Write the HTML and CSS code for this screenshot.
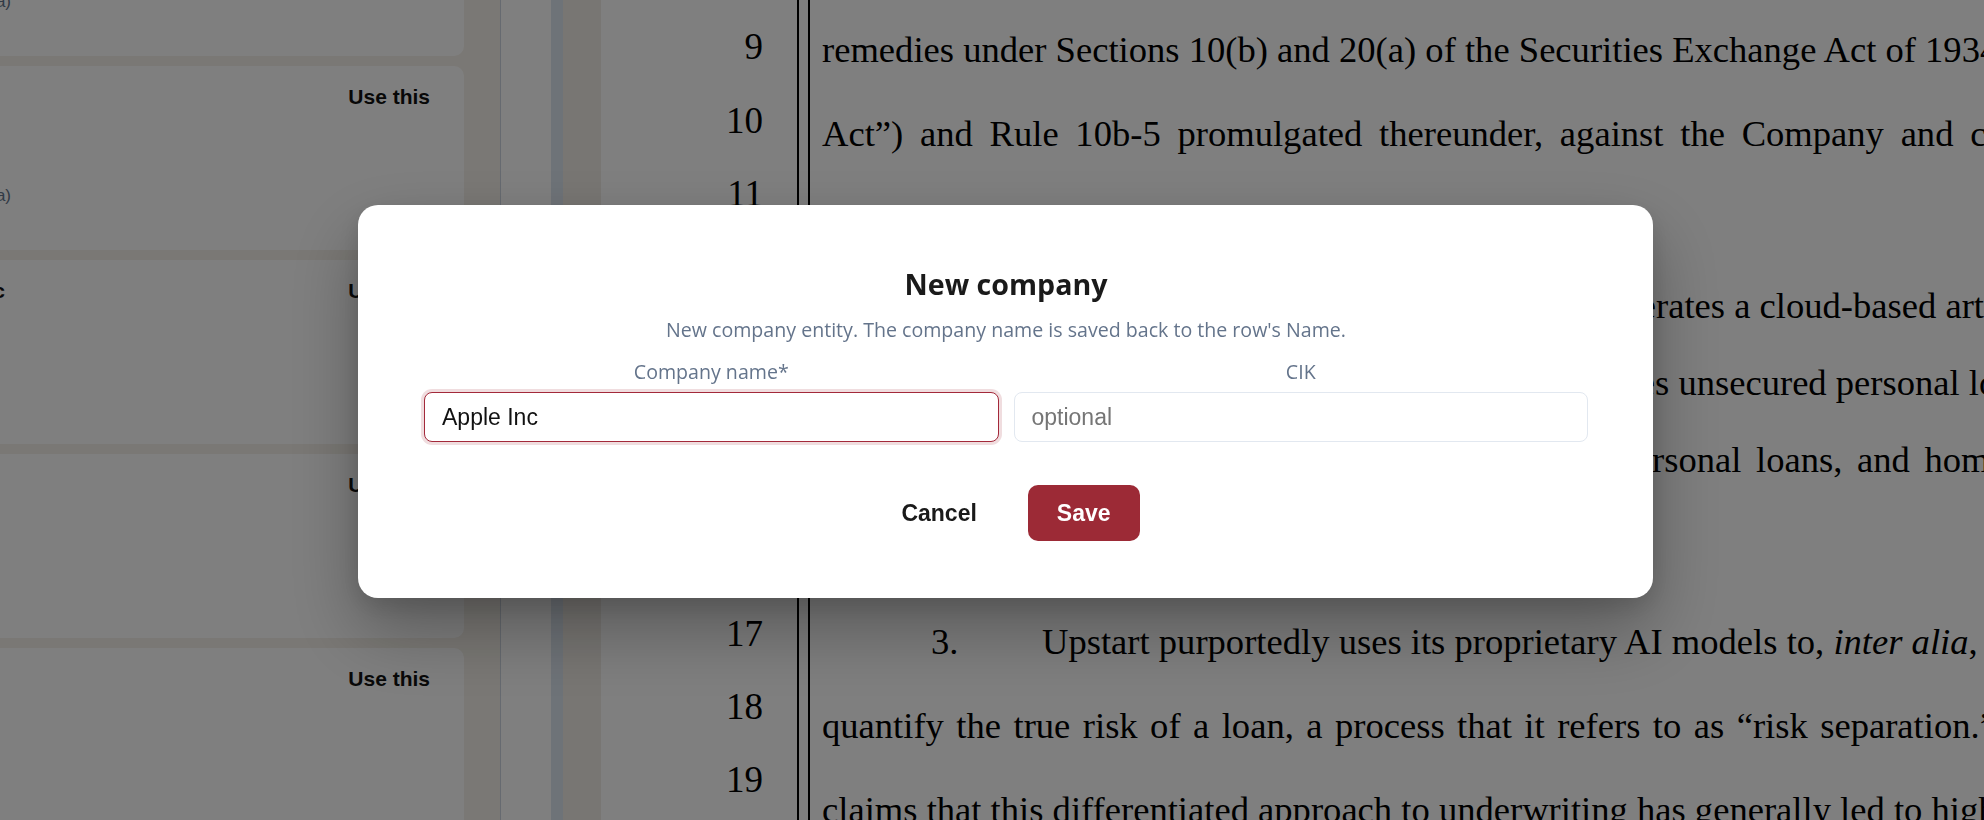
FILE: index.html
```html
<!DOCTYPE html>
<html lang="en">
<head>
<meta charset="UTF-8" />
<meta name="viewport" content="width=device-width, initial-scale=1" />
<title>Complaint review - New company</title>
<link rel="stylesheet" href="styles.css">
</head>
<body>

<div class="app">
  <aside class="side">
    <div class="list">
      <div class="card">
        <div class="card-info">
          <div class="card-title">Apple REIT Ten Inc</div>
          <div class="card-meta">
            <div>CIK 0001498864</div>
            <div>Matched on name</div>
            <div class="tail">Sections 10(b) and 20(a)</div>
          </div>
        </div>
        <span class="use">Use this</span>
      </div>

      <div class="card">
        <div class="card-info">
          <div class="card-title">Apple Hospitality</div>
          <div class="card-meta">
            <div>CIK 0001418121</div>
            <div>Matched on name</div>
            <div class="tail">Sections 10(b) and 20(a)</div>
          </div>
        </div>
        <span class="use">Use this</span>
      </div>

      <div class="card">
        <div class="card-info">
          <div class="card-title tail">Apple Inc</div>
          <div class="card-meta">
            <div>CIK 0000320193</div>
            <div>Exact match</div>
            <div>Rule 10b-5</div>
          </div>
        </div>
        <span class="use">Use this</span>
      </div>

      <div class="card">
        <div class="card-info">
          <div class="card-title">Upstart</div>
          <div class="card-meta">
            <div>CIK 0001647639</div>
            <div>Named defendant</div>
            <div>Rule 10b-5</div>
          </div>
        </div>
        <span class="use">Use this</span>
      </div>

      <div class="card">
        <div class="card-info">
          <div class="card-title">Upstart Network</div>
          <div class="card-meta">
            <div>No CIK</div>
            <div>Subsidiary</div>
            <div>Rule 10b-5</div>
          </div>
        </div>
        <span class="use">Use this</span>
      </div>
    </div>
  </aside>

  <div class="pane"></div>
  <div class="splitter"></div>
  <div class="gutter"></div>

  <main class="doc">
    <div class="numbers">
      <div>8</div>
      <div>9</div>
      <div>10</div>
      <div>11</div>
      <div>12</div>
      <div>13</div>
      <div>14</div>
      <div>15</div>
      <div>16</div>
      <div>17</div>
      <div>18</div>
      <div>19</div>
    </div>
    <div class="rule"></div>
    <div class="text">
      <div class="para p1">
        <div class="ln">remedies under Sections 10(b) and 20(a) of the Securities Exchange Act of 1934 (the &ldquo;Exchange</div>
        <div class="ln ws-wide">Act&rdquo;) and Rule 10b-5 promulgated thereunder, against the Company and certain of its</div>
      </div>
      <div class="para p2">
        <div class="ln"><span class="under">Upstart, through its subsidiaries, ope</span>rates a cloud-based artificial intelligence</div>
        <div class="ln"><span class="under under-d">a lending marketplace that originate</span>s unsecured personal loans, auto</div>
        <div class="ln ws-mid"><span class="under under-e">refinance loans, small-dollar pe</span>rsonal loans, and home equity</div>
        <div class="ln">lines of credit.</div>
      </div>
      <div class="para p3">
        <div class="ln first"><span class="pnum">3.</span>Upstart purportedly uses its proprietary AI models to, <em>inter alia</em>, better</div>
        <div class="ln ws-tight">quantify the true risk of a loan, a process that it refers to as &ldquo;risk separation.&rdquo;</div>
        <div class="ln">claims that this differentiated approach to underwriting has generally led to higher</div>
      </div>
    </div>
  </main>
</div>

<div class="backdrop">
  <div class="modal">
    <h2>New company</h2>
    <p class="sub">New company entity. The company name is saved back to the row's Name.</p>

    <div class="fields">
      <div class="field">
        <label for="companyName">Company name*</label>
        <input id="companyName" type="text" class="is-focused" value="Apple Inc" />
      </div>
      <div class="field">
        <label for="cik">CIK</label>
        <input id="cik" type="text" placeholder="optional" />
      </div>
    </div>

    <div class="actions">
      <button class="btn">Cancel</button>
      <button class="btn btn-primary">Save</button>
    </div>
  </div>
</div>

</body>
</html>
```

FILE: styles.css
```css
html, body {
  margin: 0;
  padding: 0;
}

body {
  width: 1984px;
  height: 820px;
  overflow: hidden;
  font-family: "Liberation Sans", Arial, sans-serif;
  background: #fff;
}

.app {
  display: flex;
  height: 820px;
}

/* left candidate list (scrolled partly out of view) */
.side {
  flex: 0 0 501px;
  box-sizing: border-box;
  padding-right: 36px;
  background: #f5f1ea;
  border-right: 1px solid #cdd5e0;
  overflow: hidden;
}

.list {
  display: flex;
  flex-direction: column;
  gap: 10.5px;
  margin: -128px 0 0 -20px;
}

.card {
  display: flex;
  align-items: flex-start;
  height: 183.5px;
  box-sizing: border-box;
  padding: 18px 34px 0 0;
  background: #fff;
  border-radius: 10px;
}

.card-info {
  width: 300px;
  margin-left: -269px;
  overflow: hidden;
  white-space: nowrap;
}

.card-title {
  font-size: 21px;
  font-weight: bold;
  line-height: 26px;
  color: #111;
}

.card-title.tail {
  padding-right: 6px;
}

.card-meta {
  margin-top: 11px;
  font-size: 17px;
  line-height: 30px;
  color: #64748b;
}

.tail {
  text-align: right;
}

.use {
  margin-left: auto;
  font-size: 21px;
  font-weight: bold;
  line-height: 26px;
  color: #111;
}

.pane {
  flex: 0 0 50px;
  background: #fff;
}

.splitter {
  flex: 0 0 12px;
  background: #dde6f0;
}

.gutter {
  flex: 0 0 38px;
  background: #f0ece6;
}

/* pleading page */
.doc {
  flex: 1;
  min-width: 0;
  display: flex;
  overflow: hidden;
  background: #fff;
  color: #000;
  font-family: "Liberation Serif", "Times New Roman", serif;
}

.numbers {
  flex: 0 0 162px;
  margin-top: -62.9px;
  text-align: right;
  font-size: 37px;
  line-height: 73.3px;
}

.rule {
  flex: 0 0 9px;
  margin-left: 34px;
  border-left: 2px solid #000;
  border-right: 2px solid #000;
}

.text {
  flex: 1;
  min-width: 0;
  padding: 8px 0 0 12px;
  font-size: 36.6px;
  white-space: nowrap;
}

.p1 { line-height: 84px; }
.p2 { line-height: 77px; margin-top: 90.5px; }
.p3 { line-height: 84px; margin-top: 25.5px; }

.under {
  display: inline-block;
  width: 834px;
  text-align: right;
}

.under-d { width: 833px; }
.under-e { width: 830px; }

.first { text-indent: 109px; }

.pnum {
  display: inline-block;
  width: 111px;
  text-indent: 0;
}

.ws-wide { word-spacing: 7.6px; }
.ws-mid { word-spacing: 5.5px; }
.ws-tight { word-spacing: 3.3px; }

/* dialog */
.backdrop {
  position: fixed;
  inset: 0;
  display: flex;
  align-items: center;
  justify-content: center;
  padding: 0 0 17px 27px;
  background: rgba(0, 0, 0, 0.5);
}

.modal {
  width: 1295px;
  box-sizing: border-box;
  padding: 60px 65px 57px 66px;
  background: #fff;
  border-radius: 20px;
  text-align: center;
  box-shadow: 0 32px 70px rgba(0, 0, 0, 0.3), 0 8px 24px rgba(0, 0, 0, 0.12);
}

.modal h2 {
  margin: 0;
  font-family: "Open Sans", sans-serif;
  font-size: 28.6px;
  font-weight: 700;
  line-height: 38px;
  color: #1a1a1a;
}

.sub {
  margin: 13px 0 0;
  font-family: "Open Sans", sans-serif;
  font-size: 19.6px;
  line-height: 27px;
  color: #64748b;
}

.fields {
  display: grid;
  grid-template-columns: 1fr 1fr;
  gap: 15px;
  margin-top: 15px;
}

.field label {
  display: block;
  margin-bottom: 7px;
  font-family: "Open Sans", sans-serif;
  font-size: 19.6px;
  line-height: 27px;
  color: #64748b;
}

.field input {
  display: block;
  width: 100%;
  height: 50px;
  box-sizing: border-box;
  padding: 0 17px;
  font-family: "Liberation Sans", Arial, sans-serif;
  font-size: 23px;
  color: #111;
  background: #fff;
  border: 1px solid #e2e8f0;
  border-radius: 8px;
  outline: none;
}

.field input::placeholder {
  color: #757575;
  opacity: 1;
}

.field input.is-focused {
  border: 1.5px solid #a3293a;
  box-shadow: 0 0 0 3px rgba(163, 41, 58, 0.16);
}

.actions {
  display: flex;
  justify-content: center;
  gap: 22px;
  margin-top: 43px;
}

.btn {
  height: 56px;
  padding: 0 29px;
  font-family: "Liberation Sans", Arial, sans-serif;
  font-size: 23px;
  font-weight: bold;
  color: #1a1a1a;
  background: transparent;
  border: none;
  border-radius: 10px;
  cursor: pointer;
}

.btn-primary {
  background: #9c2a36;
  color: #fff;
}
```
